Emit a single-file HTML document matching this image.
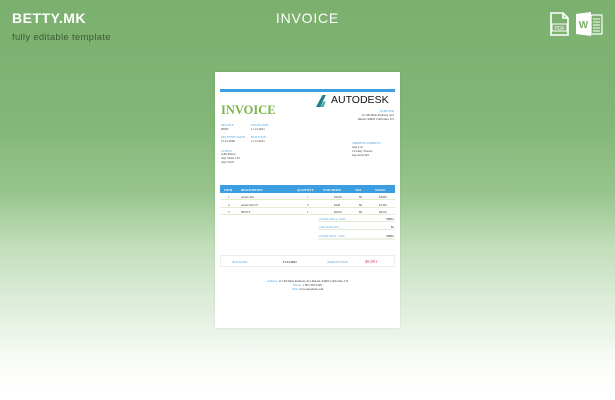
<!DOCTYPE html>
<html><head><meta charset="utf-8"><style>
*{margin:0;padding:0;box-sizing:border-box}
body{width:615px;height:400px;overflow:hidden;position:relative;font-family:"Liberation Sans",sans-serif;
background:linear-gradient(180deg,#7bb06e 0%,#82b576 30%,#98c48d 48%,#c3dfbb 62%,#e2efdf 78%,#fbfdfa 92%,#fff 100%);}
.a{position:absolute}
.logo{left:12px;top:10px;color:#fff;font-weight:bold;font-size:14px;letter-spacing:0.5px}
.sub{left:12px;top:32px;color:#3d5a36;font-size:9.5px;letter-spacing:0.3px}
.title{left:0;width:615px;top:10px;text-align:center;color:#fff;font-size:14px;letter-spacing:0.8px}
.paper{left:215px;top:72px;width:185px;height:256px;background:#fff;box-shadow:0 0 2px rgba(0,0,0,.1);font-family:"Liberation Serif",serif;font-size:3.1px;color:#333}
.p{position:absolute}
.bl{color:#4aa3dc}
.row{position:absolute;left:5px;width:175px;height:7px;border-bottom:1px solid #e4ecd8}
.row span{position:absolute;top:2px}
</style></head><body>
<div class="a logo">BETTY.MK</div>
<div class="a sub">fully editable template</div>
<div class="a title">INVOICE</div>
<svg class="a" style="left:549px;top:11px" width="22" height="26" viewBox="0 0 22 26" fill="none" stroke="#fff" stroke-width="1.6"><path d="M2 2h12l5 5v17H2z M14 2v5h5"/><rect x="3" y="13" width="15" height="7" fill="none" stroke="#fff" stroke-width="1"/><text x="10.5" y="18.8" font-size="5" font-family="Liberation Sans" fill="#fff" stroke="none" text-anchor="middle">PDF</text></svg>
<svg class="a" style="left:575px;top:11px" width="28" height="26" viewBox="0 0 28 26"><path d="M1 3l15-2v24l-15-2z" fill="#fff"/><text x="8.5" y="17" font-size="10" font-family="Liberation Sans" font-weight="bold" fill="#7bb06e" text-anchor="middle">W</text><rect x="16" y="4" width="11" height="19" fill="none" stroke="#fff" stroke-width="1.2"/><path d="M18 8h7M18 11h7M18 14h7M18 17h7M18 20h7" stroke="#fff" stroke-width="1"/></svg>

<div class="a paper">
 <div class="p" style="left:5px;top:17px;width:175px;height:3px;background:#3a9ee0"></div>
 <div class="p" style="left:6px;top:31px;font-size:12.5px;font-weight:bold;color:#7ab648">INVOICE</div>
 <svg class="p" style="left:101px;top:23px" width="13" height="12" viewBox="0 0 12 11"><path d="M0 11L6 0h3L4 11z" fill="#1d7d8f"/><path d="M4 11l3-5h2l-2 5z" fill="#3cb7a5"/></svg>
 <div class="p" style="left:116px;top:22px;font-size:10.5px;font-family:'Liberation Sans';color:#111">AUTODESK<span style="font-size:4px">.</span></div>
 <div class="p bl" style="right:6px;top:37px">SUPPLIER</div>
 <div class="p" style="right:6px;top:41px;text-align:right">111 McInnis Parkway Ave<br>Rafael, 94903 California, US</div>
 <div class="p bl" style="left:6px;top:51px">INVOICE</div><div class="p" style="left:6px;top:55px">00067</div>
 <div class="p bl" style="left:36px;top:51px">ISSUE DATE:</div><div class="p" style="left:36px;top:55px">11.12.2021</div>
 <div class="p bl" style="left:6px;top:63px">DELIVERY DATE:</div><div class="p" style="left:6px;top:67px">13.12.2026</div>
 <div class="p bl" style="left:36px;top:63px">DUE DATE:</div><div class="p" style="left:36px;top:67px">11.12.2021</div>
 <div class="p bl" style="left:6px;top:77px">CLIENT</div><div class="p" style="left:6px;top:80px">John Eldow<br>Any Street 123<br>Any Town</div>
 <div class="p bl" style="left:137px;top:69px">SHIPPING ADDRESS</div><div class="p" style="left:137px;top:73px">Any Ltd.<br>123 Any Towers<br>any street 001</div>
 <div class="p" style="left:5px;top:113px;width:175px;height:8px;background:#3a9ee0"></div>
 <div class="p" style="left:9px;top:115.5px;color:#fff;font-weight:bold">ITEM</div>
 <div class="p" style="left:26px;top:115.5px;color:#fff;font-weight:bold">DESCRIPTION</div>
 <div class="p" style="left:82px;top:115.5px;color:#fff;font-weight:bold">QUANTITY</div>
 <div class="p" style="left:108px;top:115.5px;color:#fff;font-weight:bold">UNIT PRICE</div>
 <div class="p" style="left:140px;top:115.5px;color:#fff;font-weight:bold">TAX</div>
 <div class="p" style="left:160px;top:115.5px;color:#fff;font-weight:bold">TOTAL</div>
 <div class="row" style="top:121px"><span style="left:8px">1</span><span style="left:21px">AutoCAD</span><span style="left:87px">1</span><span style="left:114px">$4526</span><span style="left:139px">$0</span><span style="left:159px">$4926</span></div>
 <div class="row" style="top:129px"><span style="left:8px">2</span><span style="left:21px">AutoCAD LT</span><span style="left:87px">3</span><span style="left:114px">$440</span><span style="left:139px">$0</span><span style="left:159px">$1320</span></div>
 <div class="row" style="top:136px"><span style="left:8px">3</span><span style="left:21px">REVIT</span><span style="left:87px">1</span><span style="left:114px">$2610</span><span style="left:139px">$0</span><span style="left:159px">$2610</span></div>
 <div class="row" style="left:103px;width:77px;top:143px"><span class="bl" style="left:1px">TOTAL EXCL. TAX:</span><span style="right:1px">$8891</span></div>
 <div class="row" style="left:103px;width:77px;top:151px"><span class="bl" style="left:1px">TAX (VAT) 0%:</span><span style="right:1px">$0</span></div>
 <div class="row" style="left:103px;width:77px;top:160px;height:8px;border-bottom:2px solid #edf2e6"><span class="bl" style="left:1px">TOTAL INCL. TAX:</span><span style="right:1px">$8891</span></div>
 <div class="p" style="left:5px;top:183px;width:175px;height:12px;border:1px solid #edf0e6"></div>
 <div class="p bl" style="left:17px;top:187.5px">DUE DATE:</div>
 <div class="p" style="left:68px;top:187.5px;font-weight:bold">11.12.2021</div>
 <div class="p bl" style="left:112px;top:187.5px">AMOUNT DUE:</div>
 <div class="p" style="left:150px;top:186.5px;font-size:4.5px;color:#d0476b">$8,891</div>
 <div class="p" style="left:0;width:185px;top:207px;text-align:center;line-height:1.35"><span class="bl">Address:</span> 111 McInnis Parkway Ave Rafael, 94903 California, US<br><span class="bl">Phone:</span> 1 803 330 0299<br><span class="bl">Web:</span> www.autodesk.com</div>
</div>
</body></html>
